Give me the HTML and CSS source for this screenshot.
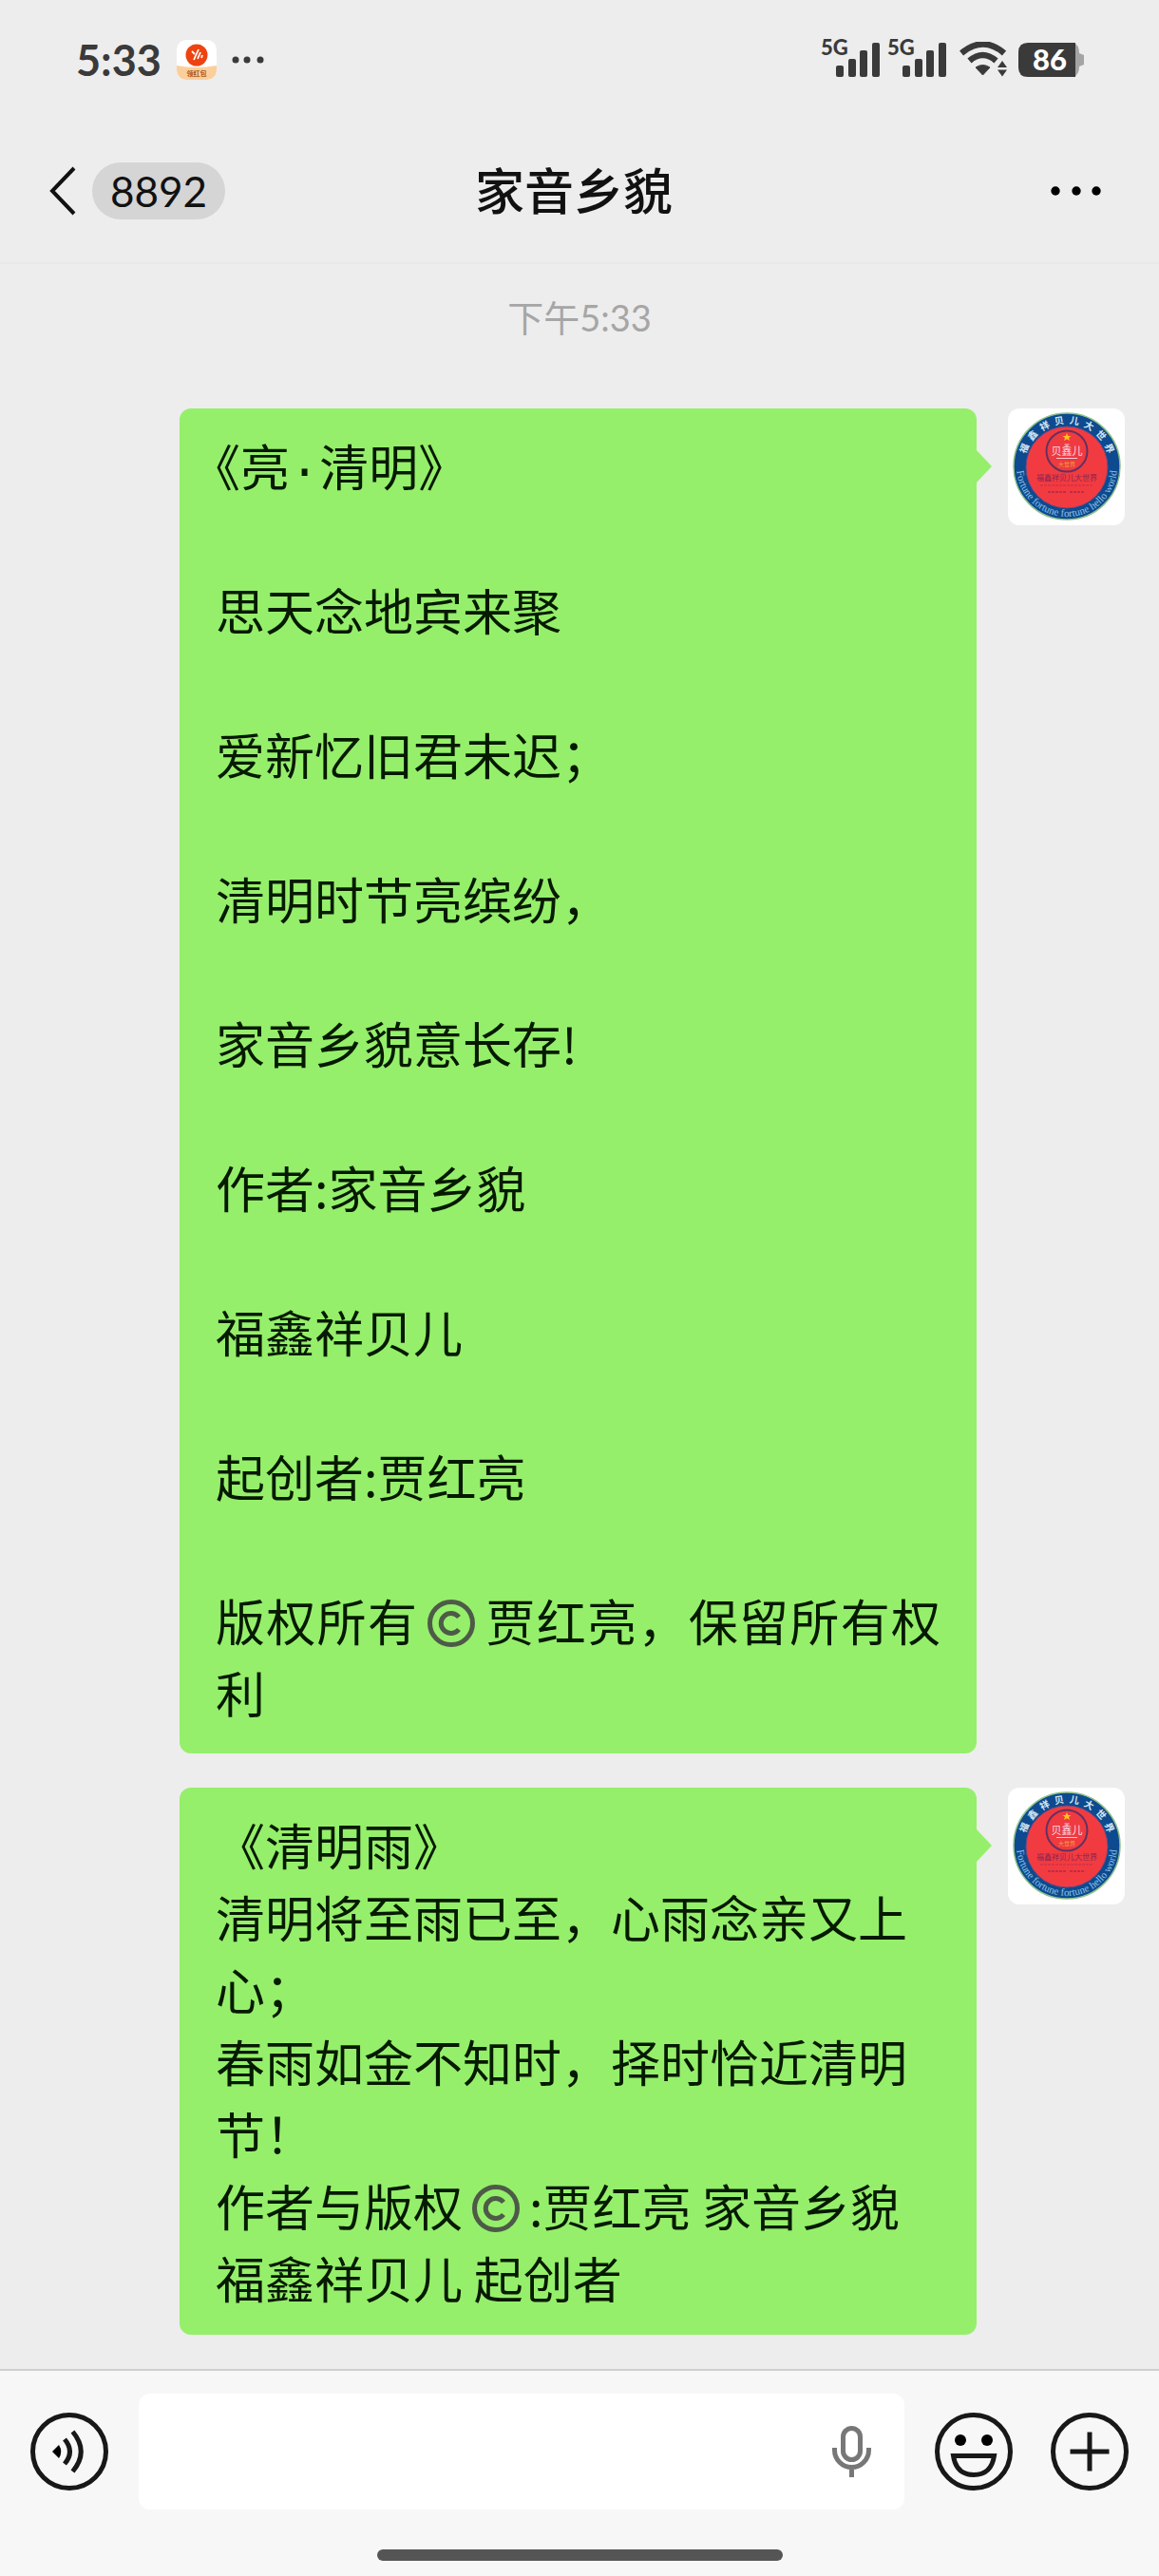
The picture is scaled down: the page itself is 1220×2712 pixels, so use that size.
FILE: index.html
```html
<!DOCTYPE html>
<html lang="zh-CN">
<head>
    <meta charset="UTF-8">
    <title>家音乡貌</title>
    <meta name="viewport" content="width=device-width, initial-scale=1.0">
    <link rel="stylesheet" href="styles.css">
</head>
<body>
<!-- 公用图形 -->
<svg class="defs" width="0" height="0" aria-hidden="true">
    <symbol id="signal" viewBox="0 0 46 36">
        <rect x="0" y="24" width="8" height="12" rx="2"/>
        <rect x="13" y="17" width="8" height="19" rx="2"/>
        <rect x="25" y="8" width="8" height="28" rx="2"/>
        <rect x="38" y="0" width="8" height="36" rx="2"/>
    </symbol>
    <symbol id="copyright" viewBox="0 0 50 50">
        <circle cx="25" cy="25" r="22.5" fill="none" stroke="#4e5a48" stroke-width="5"/>
        <path d="M33 18.5A10.5 10.5 0 1 0 33 31.500" fill="none" stroke="#4e5a48" stroke-width="5"/>
    </symbol>
    <symbol id="logo" viewBox="0 0 123 123">
        <circle cx="62" cy="61" r="56" fill="#0d4a8f" stroke="#8fc08a" stroke-width="1.500"/>
        <circle cx="62" cy="62" r="43" fill="#f23b40" stroke="#6a4a86" stroke-width="1"/>
        <circle cx="62" cy="45" r="21.500" fill="#ee3a40" stroke="#63315f" stroke-width="2"/>
        <path d="M62 26l1.300 3h3.200l-2.500 2 1 3-3-1.800-3 1.800 1-3-2.500-2h3.200z" fill="#ffc21c"/>
        <path d="M59.500 38h5M51 52.500h22" stroke="#f7c9d2" stroke-width="1.200"/>
        <path d="M34 81h56" stroke="#c52c46" stroke-dasharray="3 1"/>
        <path d="M42 88h20M65 88h15" stroke="#b0294a" stroke-width="1.500" stroke-dasharray="3 1"/>
    </symbol>
    <path id="ringTop" d="M17 61A45 45 0 0 1 107 61"/>
    <path id="ringBottom" d="M9 61A53 53 0 0 0 115 61"/>
</svg>

<header class="top">
    <div class="status">
        <span class="clock">5:33</span>
        <svg class="app" width="42" height="42" viewBox="0 0 42 42">
            <rect width="42" height="42" rx="10" fill="#fff"/>
            <path d="M0 27q21 4 42 0v5a10 10 0 0 1-10 10H10A10 10 0 0 1 0 32z" fill="#fbcf9b"/>
            <circle cx="21" cy="16" r="11.500" fill="#ee4310"/>
            <path d="M16 12l3 3M18 21l5-11M22 20l3-7M26 19l1-3" stroke="#fff" stroke-width="1.800"/>
            <text x="21" y="38" font-size="7" font-weight="700" fill="#a3541c" text-anchor="middle">领红包</text>
        </svg>
        <svg class="more-small" width="34" height="8" viewBox="0 0 34 8">
            <circle cx="4" cy="4" r="3.500"/><circle cx="16" cy="4" r="3.500"/><circle cx="30" cy="4" r="3.500"/>
        </svg>
        <div class="status-right">
            <div class="signal"><span>5G</span><svg width="46" height="36"><use href="#signal"/></svg></div>
            <div class="signal"><span>5G</span><svg width="46" height="36"><use href="#signal"/></svg></div>
            <svg class="wifi" width="50" height="38" viewBox="0 0 50 38">
                <path d="M2 12Q25-7 47 12" fill="none" stroke="#3a3a3a" stroke-width="6.500"/>
                <path d="M10.500 20Q24.500 8 38.500 20" fill="none" stroke="#3a3a3a" stroke-width="6.500"/>
                <path d="M17 27q7.500-5 15 0l-7.500 8z" stroke="#3a3a3a" stroke-linejoin="round"/>
                <path d="M40 27l5-7 5 7zM40 29.500h10l-5 7z"/>
            </svg>
            <svg class="battery" width="70" height="36" viewBox="0 0 70 36">
                <path d="M58 0q6 2 6 11l5 2v10l-5 2q0 9-6 11z" fill="#a4a4a4"/>
                <path d="M10 0H60V36H10Q0 36 0 26V10Q0 0 10 0z"/>
                <text x="33" y="29" font-size="31" font-weight="900" fill="#fff" text-anchor="middle">86</text>
            </svg>
        </div>
    </div>
    <nav class="nav">
        <div class="nav-left">
            <button class="icon-btn" aria-label="返回">
                <svg width="32" height="52" viewBox="0 0 32 52"><path d="M30 2L7 26l23 24" fill="none" stroke="#111" stroke-width="4"/></svg>
            </button>
            <span class="unread">8892</span>
        </div>
        <h1>家音乡貌</h1>
        <button class="icon-btn nav-more" aria-label="更多">
            <svg width="54" height="10" viewBox="0 0 54 10"><circle cx="5" cy="5" r="4.700"/><circle cx="27" cy="5" r="4.700"/><circle cx="48" cy="5" r="4.700"/></svg>
        </button>
    </nav>
</header>

<main class="messages">
    <time class="time">下午5:33</time>

    <div class="message">
        <div class="bubble poem">
            <p class="trim">《亮<span class="dot">·</span>清明》</p>
            <p>思天念地宾来聚</p>
            <p>爱新忆旧君未迟；</p>
            <p>清明时节亮缤纷，</p>
            <p>家音乡貌意长存!</p>
            <p>作者:家音乡貌</p>
            <p>福鑫祥贝儿</p>
            <p>起创者:贾红亮</p>
            <p class="justify">版权所有<svg class="emoji" role="img" aria-label="©"><use href="#copyright"/></svg>贾红亮，保留所有权利</p>
        </div>
        <svg class="avatar" viewBox="0 0 123 123">
            <use href="#logo"/>
            <text font-size="10" font-weight="700" fill="#d5e8f5" text-anchor="middle"><textPath href="#ringTop" startOffset="50%">福&ensp;鑫&ensp;祥&ensp;贝&ensp;儿&ensp;大&ensp;世&ensp;界</textPath></text>
            <text class="serif" font-size="11" fill="#8fc3e8" text-anchor="middle"><textPath href="#ringBottom" startOffset="50%">Fortune fortune fortune hello world</textPath></text>
            <text x="62" y="49" font-size="11" fill="#fbdbe2" text-anchor="middle">贝鑫儿</text>
            <text x="62" y="61" font-size="6" fill="#f0a53c" text-anchor="middle">大世界</text>
            <text x="62" y="76" font-size="8" fill="#8c2550" text-anchor="middle">福鑫祥贝儿大世界</text>
        </svg>
    </div>

    <div class="message">
        <div class="bubble">
            <p>《清明雨》</p>
            <p>清明将至雨已至，心雨念亲又上心；</p>
            <p>春雨如金不知时，择时恰近清明节！</p>
            <p>作者与版权<svg class="emoji" role="img" aria-label="©"><use href="#copyright"/></svg>:贾红亮 家音乡貌</p>
            <p>福鑫祥贝儿 起创者</p>
        </div>
        <svg class="avatar" viewBox="0 0 123 123">
            <use href="#logo"/>
            <text font-size="10" font-weight="700" fill="#d5e8f5" text-anchor="middle"><textPath href="#ringTop" startOffset="50%">福&ensp;鑫&ensp;祥&ensp;贝&ensp;儿&ensp;大&ensp;世&ensp;界</textPath></text>
            <text class="serif" font-size="11" fill="#8fc3e8" text-anchor="middle"><textPath href="#ringBottom" startOffset="50%">Fortune fortune fortune hello world</textPath></text>
            <text x="62" y="49" font-size="11" fill="#fbdbe2" text-anchor="middle">贝鑫儿</text>
            <text x="62" y="61" font-size="6" fill="#f0a53c" text-anchor="middle">大世界</text>
            <text x="62" y="76" font-size="8" fill="#8c2550" text-anchor="middle">福鑫祥贝儿大世界</text>
        </svg>
    </div>
</main>

<footer class="bottom">
    <div class="input-area">
        <button class="icon-btn" aria-label="语音">
            <svg width="82" height="82" viewBox="0 0 82 82">
                <circle cx="41" cy="41" r="38.500" fill="none" stroke="#181818" stroke-width="5"/>
                <path d="M23 41l7-7q4.500 7 0 14z"/>
                <path d="M36 28q11 13 0 26M44.500 20q17.500 21 0 42" fill="none" stroke="#181818" stroke-width="5"/>
            </svg>
        </button>
        <div class="field">
            <input type="text" id="userInput" aria-label="输入消息">
            <button class="icon-btn" aria-label="语音输入">
                <svg width="42" height="56" viewBox="0 0 42 56" fill="none" stroke="#777" stroke-width="5">
                    <rect x="11.500" y="3.500" width="18" height="33" rx="9"/>
                    <path d="M2.500 24v2.500a18 18 0 0 0 36 0V24M20.500 44.500V55"/>
                </svg>
            </button>
        </div>
        <button class="icon-btn" aria-label="表情">
            <svg width="82" height="82" viewBox="0 0 82 82">
                <circle cx="41" cy="41" r="38.500" fill="none" stroke="#181818" stroke-width="5"/>
                <circle cx="27" cy="29" r="6"/><circle cx="55" cy="29" r="6"/>
                <path d="M19.500 45.500h43q-3 20-21.500 20t-21.500-20z" fill="none" stroke="#181818" stroke-width="5"/>
            </svg>
        </button>
        <button class="icon-btn plus" aria-label="更多功能">
            <svg width="82" height="82" viewBox="0 0 82 82">
                <circle cx="41" cy="41" r="38.500" fill="none" stroke="#181818" stroke-width="5"/>
                <path d="M41 20.500v41M20.500 41h41" stroke="#181818" stroke-width="5"/>
            </svg>
        </button>
    </div>
    <div class="home-bar"></div>
</footer>
</body>
</html>
```
FILE: styles.css
```css
html, body {
    margin: 0;
    background: #ededed;
    color: #111;
    font-family: Lato, "Noto Sans CJK SC", sans-serif;
}
body {
    min-height: 100vh;
    display: flex;
    flex-direction: column;
}
svg {
    display: block;
    flex: none;
}
.defs {
    position: absolute;
}
.serif {
    font-family: "Liberation Serif", serif;
}
.icon-btn {
    display: block;
    flex: none;
    padding: 0;
    border: 0;
    background: none;
    cursor: pointer;
}

/* 顶部 */
.top {
    border-bottom: 2px solid #e8e8e8;
}
.status {
    display: flex;
    align-items: center;
    height: 126px;
    padding: 0 78px 0 80px;
    color: #3a3a3a;
    fill: #3a3a3a;
}
.clock {
    font-size: 45px;
    font-weight: 700;
    line-height: 60px;
}
.app {
    margin-left: 16px;
}
.more-small {
    margin-left: 16px;
}
.status-right {
    display: flex;
    align-items: center;
    gap: 8px;
    margin-left: auto;
}
.signal {
    display: flex;
    width: 62px;
}
.signal span {
    width: 16px;
    font-size: 22px;
    font-weight: 900;
    line-height: 10px;
}
.wifi {
    margin-left: 6px;
}
.battery {
    margin-left: 4px;
}
.nav {
    display: grid;
    grid-template-columns: 1fr auto 1fr;
    align-items: center;
    height: 150px;
    padding: 0 60px 0 48px;
}
.nav-left {
    display: flex;
    align-items: center;
    gap: 17px;
}
.unread {
    padding: 0 19px;
    border-radius: 30px;
    background: #d5d5d5;
    font-size: 44px;
    line-height: 60px;
}
.nav h1 {
    margin: 0;
    font-size: 52px;
    font-weight: 500;
    line-height: 60px;
}
.nav-more {
    justify-self: end;
}

/* 消息 */
.messages {
    flex: 1;
    padding: 30px 36px 0 189px;
}
.time {
    display: block;
    margin: 0 0 70px -153px;
    color: #a6a6a6;
    font-size: 38px;
    line-height: 52px;
    text-align: center;
}
.message {
    display: flex;
    align-items: flex-start;
    gap: 33px;
    margin-bottom: 36px;
}
.bubble {
    position: relative;
    flex: 1;
    padding: 22px 38px;
    border-radius: 12px;
    background: #95ef6b;
    color: #061a00;
    font-family: "Noto Sans CJK SC", sans-serif;
    font-size: 52px;
    line-height: 76px;
}
.bubble::after {
    content: "";
    position: absolute;
    top: 44px;
    left: 100%;
    border: 17px solid transparent;
    border-left: 16px solid #95ef6b;
    border-right: 0;
}
.bubble p {
    margin: 0;
}
.poem {
    padding-bottom: 26px;
}
.poem p + p {
    margin-top: 76px;
}
.trim {
    text-spacing-trim: trim-start;
}
.dot {
    font-family: "Liberation Mono", monospace;
    line-height: 1;
}
.justify {
    text-align: justify;
}
.emoji {
    display: inline-block;
    width: 50px;
    height: 50px;
    margin: 0 10px;
    vertical-align: -6px;
}
.avatar {
    width: 123px;
    height: 123px;
    border-radius: 12px;
    background: #fff;
}

/* 底部输入栏 */
.bottom {
    border-top: 2px solid #cfcfcf;
    background: #f7f7f7;
}
.input-area {
    display: flex;
    align-items: center;
    gap: 32px;
    padding: 24px 32px 0;
}
.field {
    display: flex;
    flex: 1;
    align-items: center;
    height: 122px;
    padding: 0 34px 0 24px;
    border-radius: 12px;
    background: #fff;
}
.field input {
    flex: 1;
    min-width: 0;
    border: 0;
    outline: 0;
    background: none;
    font: inherit;
    font-size: 52px;
}
.plus {
    margin-left: 8px;
}
.home-bar {
    width: 35%;
    height: 12px;
    margin: 42px auto 16px;
    border-radius: 6px;
    background: #555;
}
```
